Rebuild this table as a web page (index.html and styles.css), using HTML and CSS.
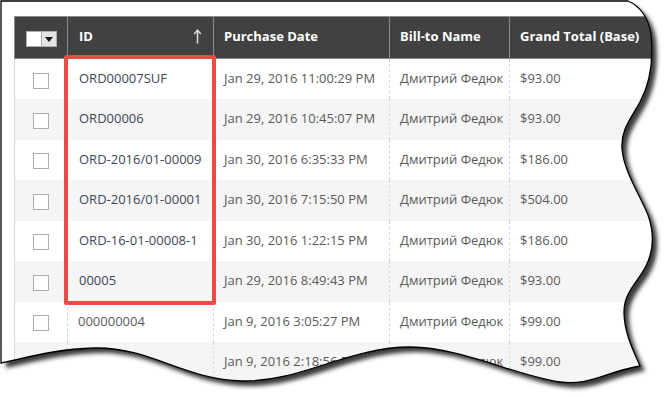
FILE: index.html
```html
<!DOCTYPE html>
<html>
<head>
<meta charset="utf-8">
<link rel="stylesheet" href="styles.css">
</head>
<body>
<div class="page">
  <table class="grid">
    <colgroup>
      <col class="c-sel"><col class="c-id"><col class="c-date"><col class="c-name"><col class="c-total">
    </colgroup>
    <thead>
      <tr>
        <th class="sel"><span class="mass"><span class="mass-box"></span><span class="mass-drop"><span class="tri"></span></span></span></th>
        <th class="idh"><span class="th-in"><span>ID</span>
          <svg class="sort" width="9" height="15" viewBox="0 0 9 15"><path d="M4.5 1.5 V14.5" stroke="#d8d8d8" stroke-width="1.6" fill="none"/><path d="M1.2 5 L4.5 1.2 L7.8 5" stroke="#d8d8d8" stroke-width="1.5" fill="none"/></svg></span></th>
        <th>Purchase Date</th>
        <th>Bill-to Name</th>
        <th>Grand Total (Base)</th>
      </tr>
    </thead>
    <tbody>
      <tr><td class="sel"><span class="cb"></span></td><td class="id">ORD00007SUF</td><td>Jan 29, 2016 11:00:29 PM</td><td>Дмитрий Федюк</td><td>$93.00</td></tr>
      <tr><td class="sel"><span class="cb"></span></td><td class="id">ORD00006</td><td>Jan 29, 2016 10:45:07 PM</td><td>Дмитрий Федюк</td><td>$93.00</td></tr>
      <tr><td class="sel"><span class="cb"></span></td><td class="id">ORD-2016/01-00009</td><td>Jan 30, 2016 6:35:33 PM</td><td>Дмитрий Федюк</td><td>$186.00</td></tr>
      <tr><td class="sel"><span class="cb"></span></td><td class="id">ORD-2016/01-00001</td><td>Jan 30, 2016 7:15:50 PM</td><td>Дмитрий Федюк</td><td>$504.00</td></tr>
      <tr><td class="sel"><span class="cb"></span></td><td class="id">ORD-16-01-00008-1</td><td>Jan 30, 2016 1:22:15 PM</td><td>Дмитрий Федюк</td><td>$186.00</td></tr>
      <tr><td class="sel"><span class="cb"></span></td><td class="id">00005</td><td>Jan 29, 2016 8:49:43 PM</td><td>Дмитрий Федюк</td><td>$93.00</td></tr>
      <tr><td class="sel"><span class="cb"></span></td><td>000000004</td><td>Jan 9, 2016 3:05:27 PM</td><td>Дмитрий Федюк</td><td>$99.00</td></tr>
      <tr><td class="sel"><span class="cb"></span></td><td>000000003</td><td>Jan 9, 2016 2:18:56 PM</td><td>Дмитрий Федюк</td><td>$99.00</td></tr>
    </tbody>
  </table>
  <div class="highlight"></div>
  <svg class="torn" width="670" height="397" viewBox="0 0 670 397">
    <defs>
      <clipPath id="outside">
        <path clip-rule="evenodd" d="M-20,-20 H700 V420 H-20 Z M1,1 H628 C640,6 649,18 651,35 C653,55 652,80 640,102 C630,120 621,130 622,148 C623,170 640,195 648,215 C654,232 654,250 646,266 C638,282 624,292 624,312 C624,332 633,350 640,366 C605,372 590,386 560,382 C520,377 460,347 410,347 C350,347 300,382 242,381 C185,380 150,347 95,348 C55,349 25,358 1,363 Z"/>
      </clipPath>
      <filter id="blur" x="-10%" y="-10%" width="120%" height="120%">
        <feGaussianBlur stdDeviation="2.2"/>
      </filter>
    </defs>
    <path fill="#ffffff" fill-rule="evenodd" d="M-20,-20 H700 V420 H-20 Z M1,1 H628 C640,6 649,18 651,35 C653,55 652,80 640,102 C630,120 621,130 622,148 C623,170 640,195 648,215 C654,232 654,250 646,266 C638,282 624,292 624,312 C624,332 633,350 640,366 C605,372 590,386 560,382 C520,377 460,347 410,347 C350,347 300,382 242,381 C185,380 150,347 95,348 C55,349 25,358 1,363 Z"/>
    <g clip-path="url(#outside)">
      <path fill="#3a3a3a" filter="url(#blur)" transform="translate(5,5)" d="M1,1 H628 C640,6 649,18 651,35 C653,55 652,80 640,102 C630,120 621,130 622,148 C623,170 640,195 648,215 C654,232 654,250 646,266 C638,282 624,292 624,312 C624,332 633,350 640,366 C605,372 590,386 560,382 C520,377 460,347 410,347 C350,347 300,382 242,381 C185,380 150,347 95,348 C55,349 25,358 1,363 Z"/>
    </g>
    <path fill="none" stroke="#000000" stroke-width="1.3" d="M1,1 H628 C640,6 649,18 651,35 C653,55 652,80 640,102 C630,120 621,130 622,148 C623,170 640,195 648,215 C654,232 654,250 646,266 C638,282 624,292 624,312 C624,332 633,350 640,366 C605,372 590,386 560,382 C520,377 460,347 410,347 C350,347 300,382 242,381 C185,380 150,347 95,348 C55,349 25,358 1,363 Z"/>
  </svg>
</div>
</body>
</html>
```

FILE: styles.css
```css
html, body {
  margin: 0;
  padding: 0;
  background: #ffffff;
  overflow: hidden;
}

.page {
  position: relative;
  width: 670px;
  height: 397px;
  padding: 16px 0 0 14px;
  box-sizing: border-box;
  overflow: hidden;
  font-family: "Open Sans", "Liberation Sans", sans-serif;
  font-size: 13px;
  color: #5a5a5a;
}

.grid {
  border-collapse: collapse;
  table-layout: fixed;
  width: 646px;
}

.c-sel { width: 53px; }
.c-id { width: 146px; }
.c-date { width: 176px; }
.c-name { width: 120px; }
.c-total { width: 151px; }

.grid th {
  height: 42px;
  box-sizing: border-box;
  background: #414141;
  color: #ffffff;
  font-weight: 700;
  font-size: 13px;
  text-align: left;
  padding: 0 11px 3px 10px;
  border: 1px solid #8a8a8a;
  white-space: nowrap;
}

.grid th.sel {
  padding: 0;
  text-align: center;
}

.th-in {
  display: flex;
  justify-content: space-between;
  align-items: center;
  padding-left: 1px;
}

.sort {
  display: block;
  margin-top: 1px;
}

.mass {
  display: inline-flex;
  vertical-align: middle;
  border: 1px solid #adadad;
  margin-top: 2px;
}

.mass-box {
  width: 14px;
  height: 14px;
  background: #ffffff;
  border-right: 1px solid #adadad;
}

.mass-drop {
  width: 14px;
  height: 14px;
  background: #e3e3e3;
  display: flex;
  align-items: center;
  justify-content: center;
}

.tri {
  width: 0;
  height: 0;
  border-left: 4px solid transparent;
  border-right: 4px solid transparent;
  border-top: 5px solid #1a1a1a;
  margin-top: 1px;
}

.grid td {
  height: 40.5px;
  box-sizing: border-box;
  padding: 0 11px 2px 10px;
  border-left: 1px dashed #d6d6d6;
  white-space: nowrap;
  overflow: hidden;
}

.grid td.sel {
  border-left: 1px solid #d6d6d6;
  text-align: center;
  padding: 0;
}

.grid td.id {
  padding-left: 11px;
  color: #3d4656;
}

.grid tbody tr:nth-child(even) td {
  background: #f5f5f5;
}

.cb {
  display: inline-block;
  vertical-align: middle;
  width: 14px;
  height: 14px;
  border: 1px solid #adadad;
  background: #ffffff;
  margin-top: 1px;
}

.highlight {
  position: absolute;
  left: 64px;
  top: 55px;
  width: 152px;
  height: 250px;
  box-sizing: border-box;
  border: 4.5px solid #e94c45;
  border-radius: 2px;
}

.torn {
  position: absolute;
  left: 0;
  top: 0;
}
```
